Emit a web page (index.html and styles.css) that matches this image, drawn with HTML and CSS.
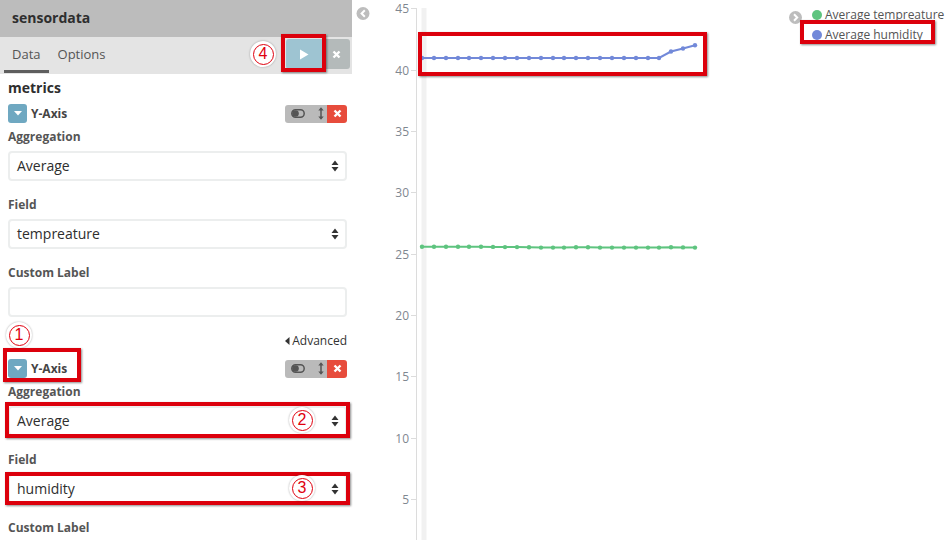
FILE: index.html
```html
<!DOCTYPE html>
<html>
<head>
<meta charset="utf-8">
<link rel="stylesheet" href="styles.css">
</head>
<body>
<div class="app">
  <aside class="sidebar">
    <div class="sb-title">sensordata</div>
    <div class="sb-tabs">
      <div class="tab active">Data</div>
      <div class="tab">Options</div>
      <div class="tab-actions">
        <button class="btn-apply"><svg width="10" height="11" viewBox="0 0 10 11"><path d="M1 0.5 L9.5 5.5 L1 10.5 Z" fill="#fff"/></svg></button>
        <button class="btn-discard"><svg width="9" height="9" viewBox="0 0 9 9"><path d="M1.5 1.5 L7.5 7.5 M7.5 1.5 L1.5 7.5" stroke="#fff" stroke-width="2.4"/></svg></button>
      </div>
    </div>
    <div class="sb-body">
      <div class="section-title">metrics</div>

      <div class="agg first">
        <div class="agg-head">
          <span class="agg-toggle"><svg width="8" height="5" viewBox="0 0 8 5"><path d="M0 0 H8 L4 4.5 Z" fill="#fff"/></svg></span>
          <span class="agg-name">Y-Axis</span>
          <div class="agg-controls">
            <span class="ctl-gray">
              <svg width="14" height="9" viewBox="0 0 14 9"><rect x="0.8" y="0.8" width="12.4" height="7.4" rx="3.7" fill="none" stroke="#555" stroke-width="1.5"/><circle cx="4.5" cy="4.5" r="3.3" fill="#555"/></svg>
              <svg width="6" height="13" viewBox="0 0 6 13"><path d="M3 1.5 V11.5" stroke="#555" stroke-width="1.5"/><path d="M0.3 3.4 L3 0.2 L5.7 3.4 Z M0.3 9.6 L3 12.8 L5.7 9.6 Z" fill="#555"/></svg>
            </span>
            <span class="ctl-red"><svg width="9" height="9" viewBox="0 0 9 9"><path d="M1.5 1.5 L7.5 7.5 M7.5 1.5 L1.5 7.5" stroke="#fff" stroke-width="2.4"/></svg></span>
          </div>
        </div>
        <div class="form-label">Aggregation</div>
        <div class="select"><span>Average</span><svg class="sel-arrows" width="8" height="12" viewBox="0 0 8 12"><path d="M0.5 5 L4 0.5 L7.5 5 Z M0.5 7 L4 11.5 L7.5 7 Z" fill="#333"/></svg></div>
        <div class="form-label gap">Field</div>
        <div class="select"><span>tempreature</span><svg class="sel-arrows" width="8" height="12" viewBox="0 0 8 12"><path d="M0.5 5 L4 0.5 L7.5 5 Z M0.5 7 L4 11.5 L7.5 7 Z" fill="#333"/></svg></div>
        <div class="form-label gap">Custom Label</div>
        <div class="input"></div>
        <div class="advanced"><svg width="5" height="8" viewBox="0 0 5 8"><path d="M4.5 0 V8 L0 4 Z" fill="#333"/></svg>Advanced</div>
      </div>

      <div class="agg second">
        <div class="agg-head">
          <span class="agg-toggle"><svg width="8" height="5" viewBox="0 0 8 5"><path d="M0 0 H8 L4 4.5 Z" fill="#fff"/></svg></span>
          <span class="agg-name">Y-Axis</span>
          <div class="agg-controls">
            <span class="ctl-gray">
              <svg width="14" height="9" viewBox="0 0 14 9"><rect x="0.8" y="0.8" width="12.4" height="7.4" rx="3.7" fill="none" stroke="#555" stroke-width="1.5"/><circle cx="4.5" cy="4.5" r="3.3" fill="#555"/></svg>
              <svg width="6" height="13" viewBox="0 0 6 13"><path d="M3 1.5 V11.5" stroke="#555" stroke-width="1.5"/><path d="M0.3 3.4 L3 0.2 L5.7 3.4 Z M0.3 9.6 L3 12.8 L5.7 9.6 Z" fill="#555"/></svg>
            </span>
            <span class="ctl-red"><svg width="9" height="9" viewBox="0 0 9 9"><path d="M1.5 1.5 L7.5 7.5 M7.5 1.5 L1.5 7.5" stroke="#fff" stroke-width="2.4"/></svg></span>
          </div>
        </div>
        <div class="form-label">Aggregation</div>
        <div class="select"><span>Average</span><svg class="sel-arrows" width="8" height="12" viewBox="0 0 8 12"><path d="M0.5 5 L4 0.5 L7.5 5 Z M0.5 7 L4 11.5 L7.5 7 Z" fill="#333"/></svg></div>
        <div class="form-label gap">Field</div>
        <div class="select"><span>humidity</span><svg class="sel-arrows" width="8" height="12" viewBox="0 0 8 12"><path d="M0.5 5 L4 0.5 L7.5 5 Z M0.5 7 L4 11.5 L7.5 7 Z" fill="#333"/></svg></div>
        <div class="form-label gap">Custom Label</div>
      </div>
    </div>
  </aside>

  <main class="chart">
    <svg class="chart-svg" width="600" height="540" viewBox="352 0 600 540">
      <circle cx="363" cy="13.5" r="6.5" fill="#bdbdbd"/>
      <path d="M364.8 10.3 L361.6 13.5 L364.8 16.7" fill="none" stroke="#fff" stroke-width="2"/>
      <rect x="421.5" y="8" width="5" height="532" fill="#f1f1f1"/>
      <line x1="416.5" y1="8" x2="416.5" y2="540" stroke="#dcdcdc" stroke-width="1"/>
      <g stroke="#dcdcdc" stroke-width="1">
        <line x1="411" y1="8.5" x2="416" y2="8.5"/>
        <line x1="411" y1="70.5" x2="416" y2="70.5"/>
        <line x1="411" y1="131.5" x2="416" y2="131.5"/>
        <line x1="411" y1="192.5" x2="416" y2="192.5"/>
        <line x1="411" y1="254.5" x2="416" y2="254.5"/>
        <line x1="411" y1="315.5" x2="416" y2="315.5"/>
        <line x1="411" y1="376.5" x2="416" y2="376.5"/>
        <line x1="411" y1="438.5" x2="416" y2="438.5"/>
        <line x1="411" y1="499.5" x2="416" y2="499.5"/>
      </g>
      <g class="ylabels" text-anchor="end">
        <text x="409" y="13">45</text>
        <text x="409" y="75">40</text>
        <text x="409" y="136">35</text>
        <text x="409" y="197">30</text>
        <text x="409" y="259">25</text>
        <text x="409" y="320">20</text>
        <text x="409" y="381">15</text>
        <text x="409" y="443">10</text>
        <text x="409" y="504">5</text>
      </g>
      <polyline fill="none" stroke="#7289d9" stroke-width="2" points="422,58 434,58 446,58 458,58 469,58 481,58 493,58 505,58 517,58 529,58 541,58 553,58 564,58 576,58 588,58 600,58 612,58 624,58 636,58 648,58 659,58 671,51.5 683,48.5 695,45.3"/>
      <g fill="#7289d9">
        <circle cx="422" cy="58" r="2.2"/><circle cx="434" cy="58" r="2.2"/><circle cx="446" cy="58" r="2.2"/><circle cx="458" cy="58" r="2.2"/><circle cx="469" cy="58" r="2.2"/><circle cx="481" cy="58" r="2.2"/><circle cx="493" cy="58" r="2.2"/><circle cx="505" cy="58" r="2.2"/><circle cx="517" cy="58" r="2.2"/><circle cx="529" cy="58" r="2.2"/><circle cx="541" cy="58" r="2.2"/><circle cx="553" cy="58" r="2.2"/><circle cx="564" cy="58" r="2.2"/><circle cx="576" cy="58" r="2.2"/><circle cx="588" cy="58" r="2.2"/><circle cx="600" cy="58" r="2.2"/><circle cx="612" cy="58" r="2.2"/><circle cx="624" cy="58" r="2.2"/><circle cx="636" cy="58" r="2.2"/><circle cx="648" cy="58" r="2.2"/><circle cx="659" cy="58" r="2.2"/><circle cx="671" cy="51.5" r="2.2"/><circle cx="683" cy="48.5" r="2.2"/><circle cx="695" cy="45.3" r="2.2"/>
      </g>
      <polyline fill="none" stroke="#5ec47f" stroke-width="2" points="422,246.7 434,246.7 446,246.7 458,246.7 469,246.7 481,246.7 493,246.9 505,247.1 517,247.1 529,247.3 541,247.6 553,247.6 564,247.6 576,247.3 588,247.3 600,247.6 612,247.6 624,247.6 636,247.6 648,247.6 659,247.6 671,247.2 683,247.4 695,247.6"/>
      <g fill="#5ec47f">
        <circle cx="422" cy="246.7" r="2.2"/><circle cx="434" cy="246.7" r="2.2"/><circle cx="446" cy="246.7" r="2.2"/><circle cx="458" cy="246.7" r="2.2"/><circle cx="469" cy="246.7" r="2.2"/><circle cx="481" cy="246.7" r="2.2"/><circle cx="493" cy="246.9" r="2.2"/><circle cx="505" cy="247.1" r="2.2"/><circle cx="517" cy="247.1" r="2.2"/><circle cx="529" cy="247.3" r="2.2"/><circle cx="541" cy="247.6" r="2.2"/><circle cx="553" cy="247.6" r="2.2"/><circle cx="564" cy="247.6" r="2.2"/><circle cx="576" cy="247.3" r="2.2"/><circle cx="588" cy="247.3" r="2.2"/><circle cx="600" cy="247.6" r="2.2"/><circle cx="612" cy="247.6" r="2.2"/><circle cx="624" cy="247.6" r="2.2"/><circle cx="636" cy="247.6" r="2.2"/><circle cx="648" cy="247.6" r="2.2"/><circle cx="659" cy="247.6" r="2.2"/><circle cx="671" cy="247.2" r="2.2"/><circle cx="683" cy="247.4" r="2.2"/><circle cx="695" cy="247.6" r="2.2"/>
      </g>
    </svg>

    <div class="legend">
      <span class="legend-toggle"><svg width="13" height="13" viewBox="0 0 13 13"><circle cx="6.5" cy="6.5" r="6.5" fill="#bdbdbd"/><path d="M5 3.3 L8.2 6.5 L5 9.7" fill="none" stroke="#fff" stroke-width="2"/></svg></span>
      <ul class="legend-list">
        <li><span class="dot green"></span>Average tempreature</li>
        <li><span class="dot blue"></span>Average humidity</li>
      </ul>
    </div>
  </main>

  <div class="mark m-play"></div>
  <div class="mark m-yaxis"></div>
  <div class="mark m-agg"></div>
  <div class="mark m-field"></div>
  <div class="mark m-line"></div>
  <div class="mark m-legend"></div>

  <span class="num n1"><span class="ring">1</span></span>
  <span class="num n2"><span class="ring">2</span></span>
  <span class="num n3"><span class="ring">3</span></span>
  <span class="num n4"><span class="ring">4</span></span>
</div>
</body>
</html>
```

FILE: styles.css
```css
* { box-sizing: border-box; }
body {
  margin: 0;
  font-family: "Open Sans", "Liberation Sans", sans-serif;
  color: #333;
  background: #fff;
}
.app {
  position: relative;
  display: flex;
  width: 952px;
  height: 540px;
  overflow: hidden;
}
.sidebar {
  width: 352px;
  flex: none;
}
.sb-title {
  height: 37px;
  background: #bcbcbc;
  padding-left: 12px;
  font-size: 14px;
  font-weight: 700;
  line-height: 36px;
  color: #2e2e2e;
}
.sb-tabs {
  display: flex;
  height: 37px;
  background: #e4e4e4;
  padding: 0 2px 0 4px;
}
.tab {
  height: 36px;
  padding: 0 8px;
  font-size: 13px;
  line-height: 34px;
  color: #555;
  border-bottom: 3px solid transparent;
}
.tab + .tab { margin-left: 1px; }
.tab.active { border-bottom-color: #5e5e5e; }
.tab-actions {
  margin-left: auto;
  display: flex;
  padding-top: 2px;
}
.tab-actions button {
  border: none;
  height: 30px;
  padding: 0;
  display: flex;
  align-items: center;
  justify-content: center;
}
.btn-apply {
  width: 36px;
  background: #9ec4d2;
  border-radius: 3px 0 0 3px;
}
.btn-discard {
  width: 28px;
  background: #b4baba;
  border-radius: 0 3px 3px 0;
}
.sb-body {
  padding: 0 5px 0 8px;
}
.section-title {
  padding-top: 5px;
  font-size: 14px;
  font-weight: 700;
  line-height: 18px;
  color: #2e2e2e;
}
.agg-head {
  display: flex;
  align-items: center;
  height: 19px;
}
.agg.first .agg-head { margin-top: 7px; }
.agg.second .agg-head { margin-top: 10px; }
.agg-toggle {
  width: 19px;
  height: 19px;
  border-radius: 3px;
  background: #6fa8c1;
  display: flex;
  align-items: center;
  justify-content: center;
}
.agg-name {
  margin-left: 4px;
  font-size: 12px;
  font-weight: 700;
  color: #444;
}
.agg-controls {
  margin-left: auto;
  display: flex;
  height: 18px;
  border-radius: 3px;
  overflow: hidden;
}
.ctl-gray {
  width: 42px;
  background: #bababa;
  display: flex;
  align-items: center;
  padding-left: 6px;
  gap: 13px;
}
.ctl-red {
  width: 20px;
  background: #e74c3c;
  display: flex;
  align-items: center;
  justify-content: center;
}
.form-label {
  margin-top: 6px;
  font-size: 12px;
  font-weight: 700;
  line-height: 16px;
  color: #555;
}
.form-label.gap { margin-top: 16px; }
.select, .input {
  margin-top: 6px;
  height: 30px;
  border: 2px solid #eceeee;
  border-radius: 4px;
}
.select {
  display: flex;
  align-items: center;
  padding: 0 6px 0 7px;
  font-size: 14px;
  line-height: 24px;
  color: #2e2e2e;
}
.select span { margin-top: -1px; }
.sel-arrows { margin-left: auto; }
.advanced {
  margin-top: 16px;
  display: flex;
  justify-content: flex-end;
  align-items: center;
  gap: 2px;
  font-size: 12px;
  line-height: 16px;
  color: #333;
}
.chart {
  position: relative;
  flex: 1;
}
.chart-svg { display: block; }
.ylabels text {
  font-family: "Open Sans", "Liberation Sans", sans-serif;
  font-size: 12px;
  fill: #7f8790;
}
.legend {
  position: absolute;
  top: 7px;
  left: 437px;
  display: flex;
  gap: 10px;
}
.legend-toggle { display: block; height: 13px; }
.legend-list {
  list-style: none;
  margin: -2px 0 0;
  padding: 0;
  font-size: 12px;
  line-height: 20px;
  color: #555;
}
.legend-list li {
  display: flex;
  align-items: center;
  gap: 3px;
}
.dot {
  width: 10px;
  height: 10px;
  border-radius: 50%;
}
.dot.green { background: #5ec47f; }
.dot.blue { background: #7289d9; }

/* annotation overlays */
.mark {
  position: absolute;
  border: 4px solid #dc000c;
  box-shadow: 1px 1px 2px rgba(0,0,0,0.45);
}
.m-play { left: 281px; top: 34px; width: 45px; height: 38px; }
.m-yaxis { left: 3px; top: 348px; width: 78px; height: 34px; }
.m-agg { left: 5px; top: 402px; width: 345px; height: 36px; }
.m-field { left: 5px; top: 472px; width: 345px; height: 33px; }
.m-line { left: 418px; top: 32px; width: 289px; height: 44px; }
.m-legend { left: 800px; top: 20px; width: 135px; height: 24px; }

.num {
  position: absolute;
  width: 26px;
  height: 26px;
  margin: -13px 0 0 -13px;
  border-radius: 50%;
  background: #fff;
  box-shadow: 0 0 2px rgba(0,0,0,0.35);
  display: flex;
  align-items: center;
  justify-content: center;
}
.ring {
  width: 21px;
  height: 21px;
  border: 1.5px solid #e0000e;
  border-radius: 50%;
  color: #e0000e;
  font-family: "Liberation Sans", sans-serif;
  font-size: 16px;
  line-height: 18px;
  text-align: center;
}
.n1 { left: 19px; top: 335px; }
.n2 { left: 302px; top: 420px; }
.n3 { left: 302px; top: 488px; }
.n4 { left: 263px; top: 54px; }
```
